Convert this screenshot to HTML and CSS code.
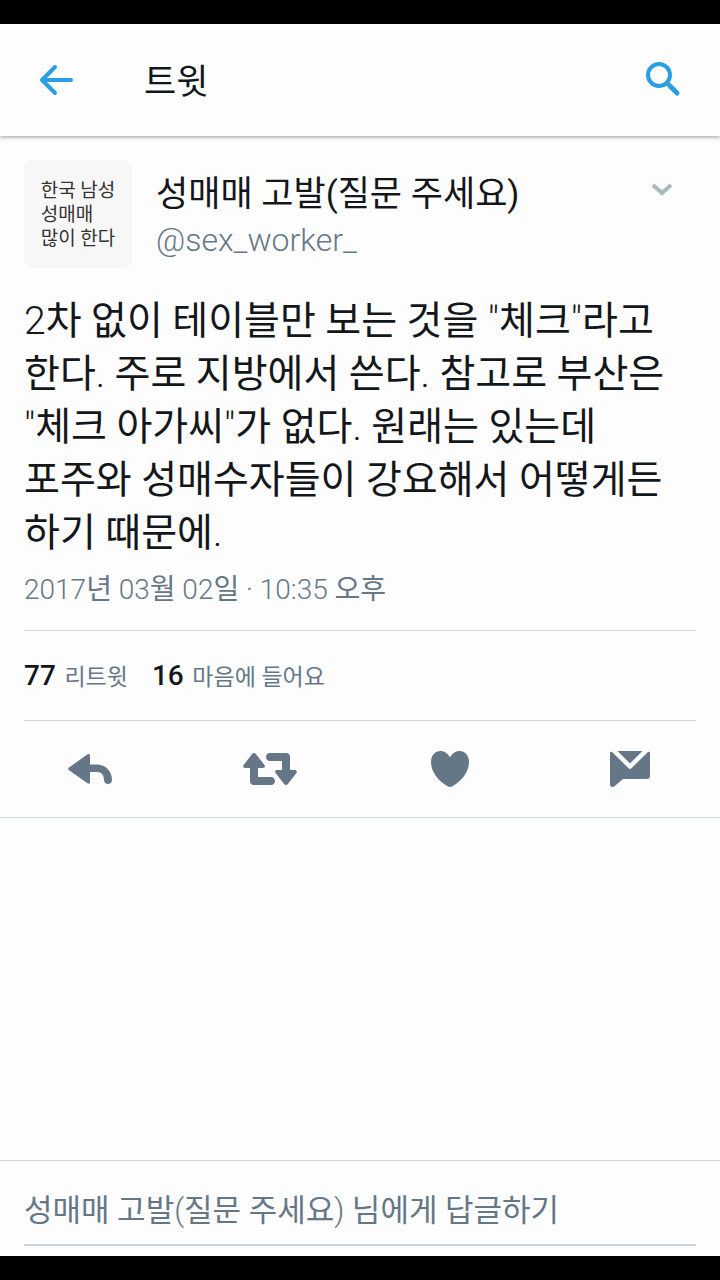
FILE: index.html
```html
<!DOCTYPE html>
<html lang="ko">

<head>
    <meta charset="UTF-8">
    <meta name="viewport" content="width=device-width, initial-scale=1.0">
    <title>트윗</title>
    <link rel="stylesheet" href="styles.css">
</head>

<body>
    <header class="topbar">
        <button class="icon-btn" type="button" aria-label="뒤로">
            <svg width="36" height="32" viewBox="0 0 36 32" fill="none" stroke="#2b9ee2" stroke-width="4" stroke-linecap="round" stroke-linejoin="round">
                <path d="M33 16H4M17 3L4 16L17 29" />
            </svg>
        </button>
        <h1 class="topbar-title">트윗</h1>
        <button class="icon-btn" type="button" aria-label="검색">
            <svg width="36" height="36" viewBox="0 0 36 36" fill="none" stroke="#2b9ee2">
                <circle cx="13" cy="13" r="11" stroke-width="4" />
                <path d="M21 21L23 23" stroke-width="4" />
                <path d="M24 24L31 31" stroke-width="5" stroke-linecap="round" />
            </svg>
        </button>
    </header>

    <main class="tweet">
        <div class="author">
            <div class="avatar">한국 남성<br>성매매<br>많이 한다</div>
            <div class="names">
                <h2 class="name">성매매 고발(질문 주세요)</h2>
                <a class="handle" href="#">@sex_worker_</a>
            </div>
            <button class="icon-btn more" type="button" aria-label="더 보기">
                <svg width="20" height="14" viewBox="0 0 20 14" fill="none" stroke="#aab8c2" stroke-width="4">
                    <path d="M1 2L10 10L19 2" />
                </svg>
            </button>
        </div>

        <p class="text">2차 없이 테이블만 보는 것을 "체크"라고 한다. 주로 지방에서 쓴다. 참고로 부산은 "체크 아가씨"가 없다. 원래는 있는데 포주와 성매수자들이 강요해서 어떻게든 하기 때문에.</p>
        <p class="date">2017년 03월 02일 · 10:35 오후</p>

        <div class="stats">
            <a href="#"><b>77</b> 리트윗</a>
            <a href="#"><b>16</b> 마음에 들어요</a>
        </div>
    </main>

    <div class="actions">
        <button class="icon-btn" type="button" aria-label="답글">
            <svg width="46" height="32" viewBox="0 0 46 32" fill="#657786">
                <path d="M20.500 1.300C21.800 .4 23 1.200 23 2.500V11.500H30C38.500 11.500 45 18 45 27C45 32.300 37 32.300 37 27C37 22 34.500 19 30 19H23V29C23 30.400 21.700 31.200 20.500 30.300L2 17.200C1 16.500 1 15.300 2 14.600Z" />
            </svg>
        </button>
        <button class="icon-btn" type="button" aria-label="리트윗">
            <svg width="54" height="34" viewBox="0 0 54 34" fill="#657786">
                <path d="M9.300 1.800C10.200 .7 11.800 .7 12.700 1.800L21.500 13C22.500 14.500 21.800 16 20 16H15V25H28C33.300 25 33.300 33 28 33H11C8.500 33 7 31.500 7 29V16H2C.3 16 -.4 14.500 .6 13Z" />
                <path d="M41.300 32.200C42.200 33.300 43.800 33.300 44.700 32.200L53.400 21C54.400 19.500 53.700 18 52 18H47V5C47 2.500 45.500 1 43 1H27C21.700 1 21.700 9 27 9H39V18H34C32.300 18 31.600 19.500 32.600 21Z" />
            </svg>
        </button>
        <button class="icon-btn" type="button" aria-label="마음에 들어요">
            <svg width="40" height="38" viewBox="0 0 40 38" fill="#657786">
                <path d="M20 7.500C18 3.500 14.500 1 10.500 1C5 1 1 5.500 1 12C1 23 9.500 31.500 17.500 36.200C19.500 37.300 20.500 37.300 22.500 36.200C30.500 31.500 39 23 39 12C39 5.500 35 1 29.500 1C25.500 1 22 3.500 20 7.500Z" />
            </svg>
        </button>
        <button class="icon-btn" type="button" aria-label="쪽지">
            <svg width="40" height="38" viewBox="0 0 40 38" fill="#657786">
                <path d="M7.500 1H32.500L20 13.500Z" />
                <path d="M0 3C0 2 1 1.300 2 2L18.500 18.200C19.500 19.200 20.500 19.200 21.500 18.200L38 2C39 1.300 40 2 40 3V26C40 28 39 29 37 29H13L4.500 36.300C2.500 37.600 0 37 0 34.500Z" />
            </svg>
        </button>
    </div>

    <form class="reply">
        <input class="reply-input" type="text" aria-label="답글" placeholder="성매매 고발(질문 주세요) 님에게 답글하기">
    </form>
</body>

</html>
```
FILE: styles.css
```css
* {
    box-sizing: border-box;
    margin: 0;
    padding: 0;
}

body {
    display: flex;
    flex-direction: column;
    min-height: 100vh;
    border-top: 24px solid #000;
    border-bottom: 24px solid #000;
    background: #fdfdfd;
    color: #14171a;
    font-family: "Roboto Light", Roboto, "Noto Sans CJK KR", sans-serif;
    font-weight: 400;
}

a {
    color: inherit;
    text-decoration: none;
}

.icon-btn {
    display: flex;
    align-items: center;
    justify-content: center;
    border: none;
    background: none;
    cursor: pointer;
}

.topbar {
    display: flex;
    align-items: center;
    height: 112px;
    padding: 0 38px;
    background: #fefefe;
    box-shadow: 0 1px 4px rgba(0, 0, 0, 0.4);
}

.topbar-title {
    flex: 1;
    margin-left: 70px;
    padding-bottom: 4px;
    font-size: 35px;
    font-weight: 400;
}

.tweet {
    padding: 24px 24px 0;
}

.author {
    display: flex;
    align-items: flex-start;
    gap: 24px;
}

.avatar {
    display: flex;
    align-items: center;
    justify-content: center;
    width: 108px;
    height: 108px;
    padding-top: 2px;
    border-radius: 8px;
    background: #f7f7f7;
    color: #333;
    font-size: 19px;
    line-height: 24px;
}

.names {
    flex: 1;
    padding-top: 12px;
}

.name {
    font-family: Roboto, "Noto Sans CJK KR", sans-serif;
    font-size: 35px;
    font-weight: 400;
    line-height: 46px;
}

.handle {
    display: block;
    color: #657786;
    font-size: 32px;
    line-height: 44px;
}

.more {
    padding: 23px 24px 0 0;
}

.text {
    margin-top: 27px;
    font-size: 39px;
    line-height: 53px;
    word-break: keep-all;
}

.date {
    margin-top: 8px;
    color: #657786;
    font-size: 28px;
    line-height: 44px;
}

.stats {
    display: flex;
    gap: 24px;
    margin-top: 18px;
    padding: 25px 0 22px;
    border-top: 1px solid #ccd6dd;
    border-bottom: 1px solid #ccd6dd;
    color: #657786;
    font-size: 23px;
    line-height: 40px;
}

.stats b {
    margin-right: 3px;
    color: #14171a;
    font-family: Roboto, sans-serif;
    font-size: 28px;
    font-weight: 500;
}

.actions {
    display: grid;
    grid-template-columns: repeat(4, 1fr);
    height: 97px;
    border-bottom: 1px solid #ccd6dd;
}

.reply {
    margin-top: auto;
    padding: 24px 24px 10px;
    border-top: 1px solid #ccd6dd;
}

.reply-input {
    width: 100%;
    height: 61px;
    padding-bottom: 8px;
    border: none;
    border-bottom: 2px solid #ccd6dd;
    background: none;
    font: inherit;
    font-size: 31px;
}

.reply-input::placeholder {
    color: #657786;
}
```
